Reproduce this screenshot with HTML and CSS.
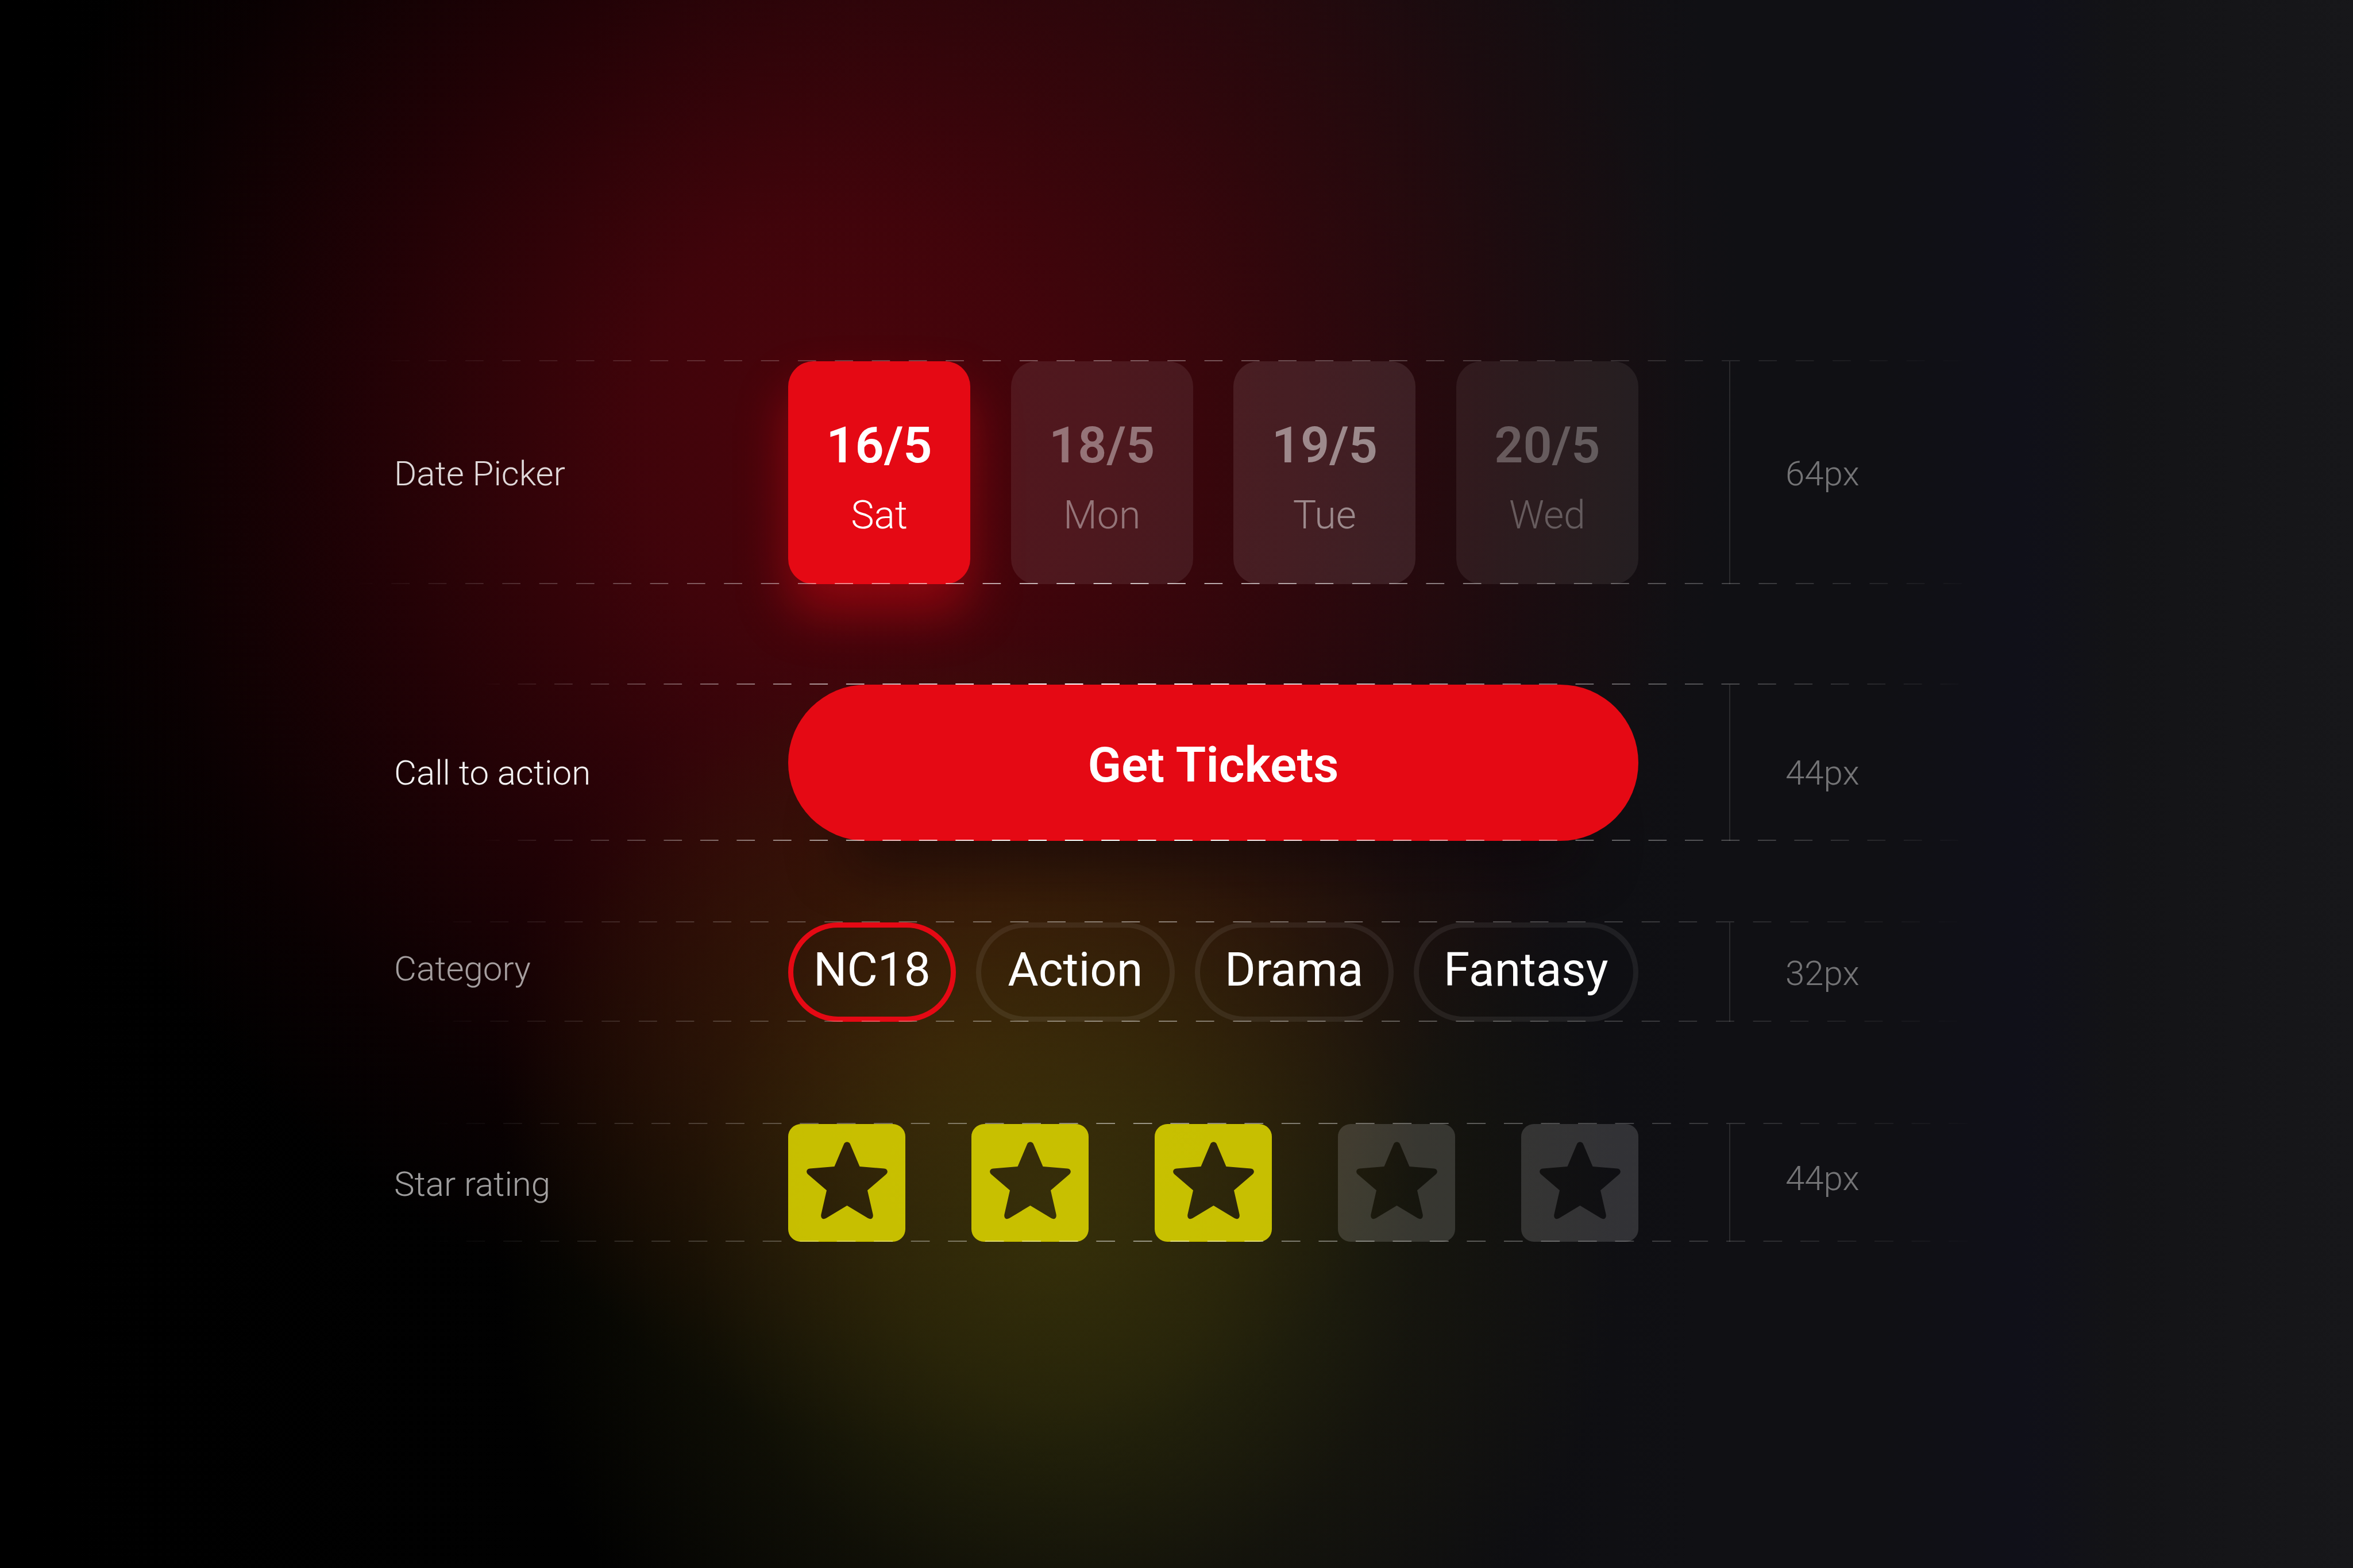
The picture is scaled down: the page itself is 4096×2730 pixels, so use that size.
FILE: index.html
```html
<!DOCTYPE html>
<html lang="en">
<head>
<meta charset="utf-8">
<title>Movie booking components</title>
<link rel="stylesheet" href="styles.css">
</head>
<body>
<svg class="defs" aria-hidden="true">
  <symbol id="star-tile" viewBox="0 0 204 205">
    <path fill-rule="evenodd" d="M22 0H182A22 22 0 0 1 204 22V183A22 22 0 0 1 182 205H22A22 22 0 0 1 0 183V22A22 22 0 0 1 22 0ZM97 35L80.500 74L38 77.500C32 78 30 84 35 88L67 115.500L57.500 157C56 164 61 167 66 164L102.500 142L139 164C144 167 149 164 147.500 157L138 115.500L170 88C175 84 173 78 167 77.500L124.500 74L108 35C106 30 99 30 97 35Z"/>
  </symbol>
</svg>
<main class="sheet">
  <section class="row row-date">
    <h2 class="label">Date Picker</h2>
    <div class="controls">
      <button class="date date-active" type="button"><span class="date-day">16/5</span><span class="date-name">Sat</span></button>
      <button class="date date-mon" type="button"><span class="date-day">18/5</span><span class="date-name">Mon</span></button>
      <button class="date date-tue" type="button"><span class="date-day">19/5</span><span class="date-name">Tue</span></button>
      <button class="date date-wed" type="button"><span class="date-day">20/5</span><span class="date-name">Wed</span></button>
    </div>
    <p class="size">64px</p>
  </section>
  <section class="row row-cta">
    <h2 class="label">Call to action</h2>
    <div class="controls"><button class="cta" type="button">Get Tickets</button></div>
    <p class="size">44px</p>
  </section>
  <section class="row row-category">
    <h2 class="label">Category</h2>
    <div class="controls">
      <button class="chip chip-short chip-active" type="button">NC18</button>
      <button class="chip" type="button">Action</button>
      <button class="chip" type="button">Drama</button>
      <button class="chip chip-long" type="button">Fantasy</button>
    </div>
    <p class="size">32px</p>
  </section>
  <section class="row row-rating">
    <h2 class="label">Star rating</h2>
    <div class="controls">
      <label class="star star-on"><input type="radio" name="rating" value="1" aria-label="1 star"><svg class="star-icon"><use href="#star-tile"/></svg></label>
      <label class="star star-on"><input type="radio" name="rating" value="2" aria-label="2 stars"><svg class="star-icon"><use href="#star-tile"/></svg></label>
      <label class="star star-on"><input type="radio" name="rating" value="3" aria-label="3 stars" checked><svg class="star-icon"><use href="#star-tile"/></svg></label>
      <label class="star"><input type="radio" name="rating" value="4" aria-label="4 stars"><svg class="star-icon"><use href="#star-tile"/></svg></label>
      <label class="star"><input type="radio" name="rating" value="5" aria-label="5 stars"><svg class="star-icon"><use href="#star-tile"/></svg></label>
    </div>
    <p class="size">44px</p>
  </section>
</main>
</body>
</html>
```
FILE: styles.css
```css
* { box-sizing: border-box; }

body {
  margin: 0;
  min-height: 100vh;
  font-family: Roboto, "Liberation Sans", sans-serif;
  color: #fff;
  background:
    radial-gradient(ellipse 24% 38% at 45% 78%, rgba(60, 58, 10, 0.75) 0%, rgba(56, 54, 10, 0.6) 30%, rgba(46, 44, 8, 0.26) 65%, rgba(46, 44, 8, 0) 100%),
    radial-gradient(ellipse 20% 26% at 41% 67%, rgba(84, 36, 4, 0.6) 0%, rgba(74, 30, 4, 0.34) 50%, rgba(70, 28, 4, 0) 100%),
    radial-gradient(ellipse 36% 58% at 36% 28%, #4a040b 0%, rgba(70, 4, 11, 0.9) 25%, rgba(64, 3, 10, 0.5) 58%, rgba(60, 3, 9, 0.15) 84%, rgba(60, 3, 9, 0) 100%),
    radial-gradient(ellipse 25% 60% at 49% 22%, rgba(60, 14, 14, 0.45) 0%, rgba(56, 14, 14, 0.22) 55%, rgba(50, 14, 14, 0) 100%),
    linear-gradient(90deg, #000 0%, #010101 25%, #0b0b0e 55%, #101014 72%, #101014 80%, #101019 86%, #131316 90%, #17171a 100%);
}

.defs { position: absolute; width: 0; height: 0; }

.sheet {
  display: flex;
  flex-direction: column;
  min-height: 100vh;
  padding-top: 629px;
}

.row {
  position: relative;
  display: grid;
  grid-template-columns: 686fr 1480fr 158fr 1086fr;
  align-items: center;
  padding-left: 686px;
}

/* Dashed guides along the top and bottom edge of every row */
.row::before,
.row::after {
  content: "";
  position: absolute;
  left: 617px;
  right: 648px;
  height: 2px;
  background: linear-gradient(90deg, #fff 50%, transparent 50%) 0 0 / 64px 2px round;
  mask-image: linear-gradient(90deg, transparent 0%, #000 46%, transparent 100%);
  pointer-events: none;
}
.row::before { top: -2px; opacity: 0.35; }
.row::after { bottom: 0; opacity: 0.75; }

.row-date { margin-bottom: 175px; }
.row-cta { margin-bottom: 142px; }
.row-category { margin-bottom: 178px; }

.row-cta::before,
.row-cta::after {
  left: 838px;
  right: 655px;
  opacity: 1;
  mask-image: linear-gradient(90deg, transparent 0%, rgba(0, 0, 0, 0.5) 20%, #000 37%, #000 48%, rgba(0, 0, 0, 0.45) 70%, transparent 100%);
}
.row-category::before,
.row-category::after { left: 724px; right: 656px; opacity: 0.45; }
.row-rating::before,
.row-rating::after { left: 747px; right: 639px; opacity: 0.5; }

.label,
.size {
  margin: 0;
  padding-top: 4px;
  font-size: 60px;
  font-weight: 350;
  line-height: 72px;
}
.label { color: rgba(255, 255, 255, 0.85); }
.size {
  grid-column: 4;
  display: flex;
  align-items: center;
  align-self: stretch;
  padding-left: 96px;
  border-left: 2px solid rgba(255, 255, 255, 0.11);
  color: rgba(255, 255, 255, 0.42);
}
.row-cta .label { color: rgba(255, 255, 255, 0.95); }
.row-category .label,
.row-rating .label { color: rgba(255, 255, 255, 0.62); }
.row-cta .label,
.row-cta .size { padding-top: 36px; }
.row-category .label { padding: 0 0 12px; }
.row-rating .size { padding-top: 0; padding-bottom: 16px; }

.controls {
  display: flex;
  justify-content: space-between;
}

button {
  margin: 0;
  border: 0;
  font-family: inherit;
  color: #fff;
  background: none;
}

.date {
  display: flex;
  flex-direction: column;
  align-items: center;
  justify-content: center;
  gap: 28px;
  width: 317px;
  height: 388px;
  padding: 20px 0 0;
  border-radius: 44px;
}
.date-day { font-size: 88px; font-weight: 600; line-height: 100px; }
.date-name { font-size: 68px; font-weight: 350; line-height: 88px; }
.date-active { background: #e50914; box-shadow: 0 52px 88px rgba(229, 9, 20, 0.45); }
.date-mon { background: rgba(255, 255, 255, 0.08); color: rgba(255, 255, 255, 0.4); }
.date-tue { background: rgba(255, 240, 250, 0.1); color: rgba(255, 255, 255, 0.48); }
.date-wed { background: rgba(255, 240, 240, 0.07); color: rgba(255, 255, 255, 0.28); }

.cta {
  flex: 1;
  height: 272px;
  padding: 6px 0 0;
  border-radius: 136px;
  font-size: 86px;
  font-weight: 600;
  background: #e50914;
  box-shadow: 0 130px 100px -100px rgba(8, 6, 8, 0.65);
}

.row-category .controls { gap: 35px; }
.chip {
  flex: 346 1 0;
  height: 173px;
  padding: 0 0 8px;
  border: 9px solid rgba(255, 255, 255, 0.07);
  border-radius: 87px;
  font-size: 82px;
  font-weight: 400;
  line-height: 147px;
}
.chip-short { flex-grow: 289; }
.chip-long { flex-grow: 394; }
.chip-active { border-color: #e50914; }

.star {
  position: relative;
  display: block;
  width: 204px;
  height: 205px;
  color: rgba(255, 255, 255, 0.15);
}
.star-on { color: rgba(216, 208, 0, 0.9); }
.star input {
  position: absolute;
  inset: 0;
  width: 100%;
  height: 100%;
  margin: 0;
  opacity: 0;
}
.star-icon { display: block; width: 100%; height: 100%; fill: currentColor; }
```
